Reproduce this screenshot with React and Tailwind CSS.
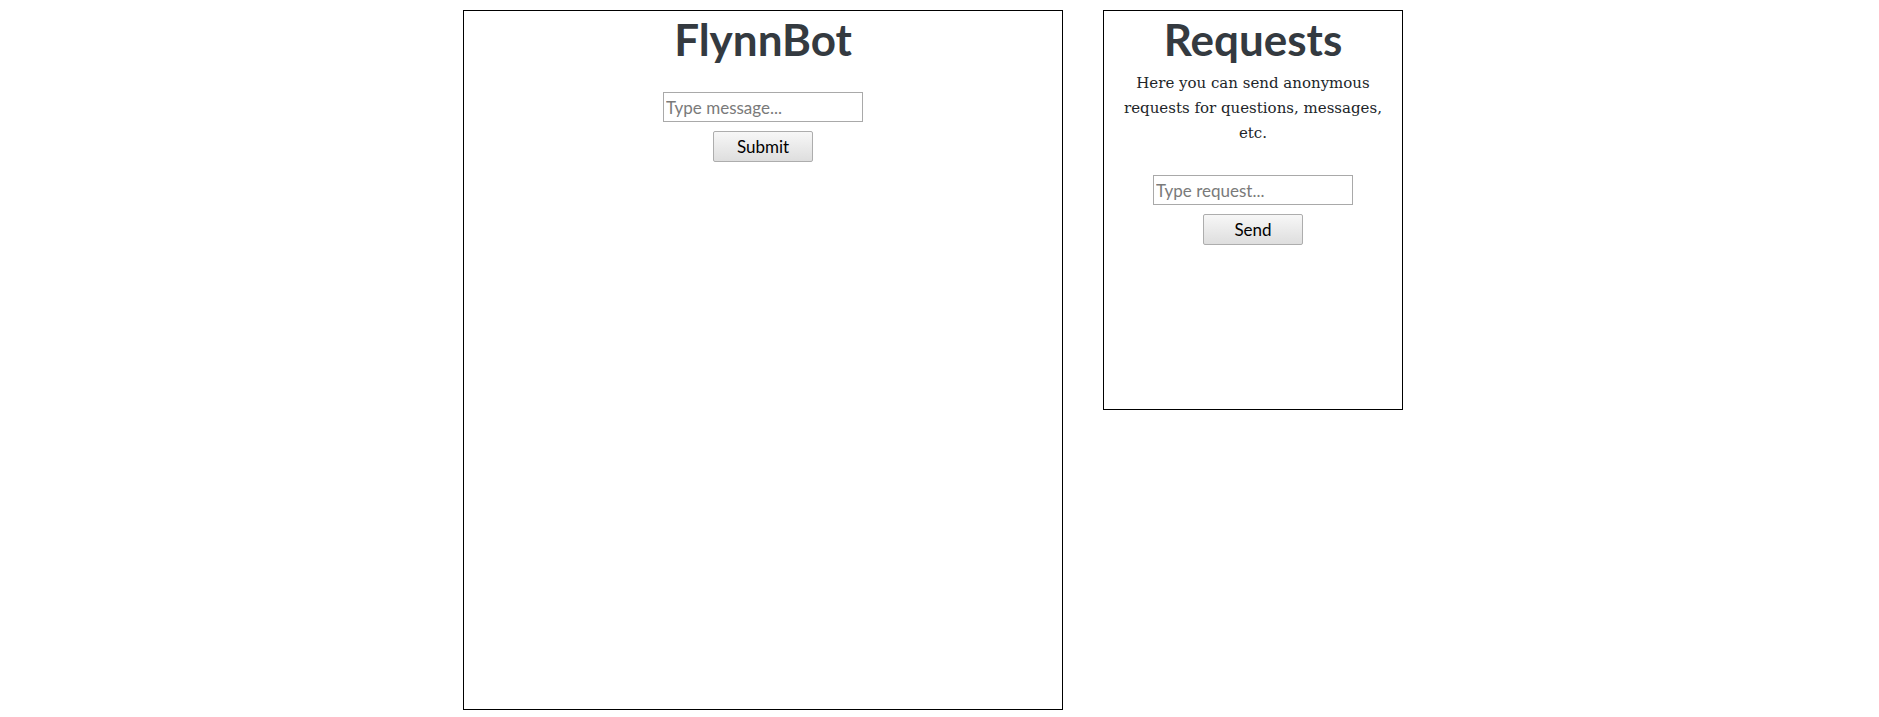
import { useState } from "react";

const titleFont = { fontFamily: "Lato, 'Open Sans', sans-serif" };

function Panel({ title, children, className }) {
    return (
        <div className={`flex flex-col items-center border border-black box-border ${className}`}>
            <h1 className="mt-[3px] text-[44px] leading-[50px] font-bold text-[#343a40]" style={titleFont}>
                {title}
            </h1>
            {children}
        </div>
    );
}

function SendBox({ placeholder, label, onSend }) {
    const [value, setValue] = useState("");

    return (
        <div className="flex flex-col items-center mt-[28px]">
            <input
                type="text"
                value={value}
                onChange={(e) => setValue(e.target.value)}
                placeholder={placeholder}
                className="w-[200px] h-[30px] border border-[#a9a9a9] px-[2px] text-[17px] text-black placeholder:text-[#7a7a7a] outline-none"
                style={titleFont}
            />
            <button
                onClick={() => { onSend && onSend(value); setValue(""); }}
                className="mt-[9px] w-[100px] h-[31px] border border-[#adadad] rounded-[2px] bg-gradient-to-b from-[#f7f7f7] to-[#dedede] text-[17px] font-normal text-black"
                style={titleFont}
            >
                {label}
            </button>
        </div>
    );
}

export default function App() {
    return (
        <div className="min-h-screen bg-white">
            <div className="flex items-start gap-[40px] pl-[463px] pt-[10px]">
                {/* Chat */}
                <Panel title="FlynnBot" className="w-[600px] h-[700px]">
                    <SendBox placeholder="Type message..." label="Submit" />
                </Panel>

                {/* Requests */}
                <Panel title="Requests" className="w-[300px] h-[400px]">
                    <p
                        className="mt-[7px] mb-[1px] px-[14px] text-center text-[15px] leading-[25px] text-[#212529]"
                        style={{ fontFamily: "'DejaVu Serif', serif" }}
                    >
                        Here you can send anonymous requests for questions, messages, etc.
                    </p>
                    <SendBox placeholder="Type request..." label="Send" />
                </Panel>
            </div>
        </div>
    );
}
